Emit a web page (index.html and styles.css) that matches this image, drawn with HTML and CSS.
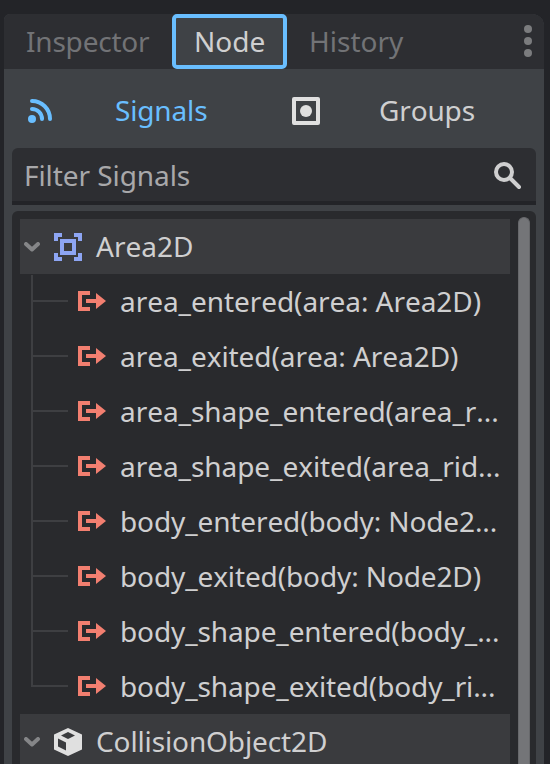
FILE: index.html
```
<!DOCTYPE html>
<html lang="en">
<head>
<meta charset="utf-8">
<title>Node</title>
<link rel="stylesheet" href="styles.css">
</head>
<body>
<svg width="0" height="0" class="defs">
  <symbol id="signal" viewBox="0 0 28 20"><path d="M0 0h12v4H4v12h8v4H0zM8 8h10V2l10 8-10 8v-6H8z"/></symbol>
  <symbol id="chevron" viewBox="0 0 16 10"><path d="M2 2l6 5.5L14 2" fill="none" stroke="currentColor" stroke-width="4" stroke-linecap="round" stroke-linejoin="round"/></symbol>
</svg>
<main class="dock">
  <nav class="tabs">
    <div class="tab inspector">Inspector</div>
    <div class="tab active">Node</div>
    <div class="tab history">History</div>
    <svg class="more" width="8" height="32" viewBox="0 0 8 32"><circle cx="4" cy="4" r="4"/><circle cx="4" cy="16" r="4"/><circle cx="4" cy="28" r="4"/></svg>
  </nav>
  <div class="modes">
    <div class="mode signals">
      <svg width="24" height="24" viewBox="0 0 24 24"><circle cx="4" cy="20" r="4" fill="currentColor"/><path d="M4 2a18 18 0 0 1 18 18M4 10a10 10 0 0 1 10 10" fill="none" stroke="currentColor" stroke-width="4" stroke-linecap="round"/></svg>
      <span>Signals</span>
    </div>
    <div class="mode groups">
      <svg width="28" height="28" viewBox="0 0 28 28"><rect x="2" y="2" width="24" height="24" fill="none" stroke="#e0e0e0" stroke-width="4" stroke-linejoin="round"/><circle cx="14" cy="14" r="6" fill="#e0e0e0"/></svg>
      <span>Groups</span>
    </div>
  </div>
  <div class="filter">
    <span>Filter Signals</span>
    <svg width="28" height="28" viewBox="0 0 28 28"><circle cx="10" cy="10" r="8"/><path d="M16 16l9 9"/></svg>
  </div>
  <div class="list">
    <div class="tree">
      <div class="group">
        <svg class="chevron" width="16" height="10"><use href="#chevron"/></svg>
        <svg class="kind" width="28" height="28" viewBox="0 0 28 28"><path fill="#8da5f3" fill-rule="evenodd" d="M0 0h8v4H4v4H0zM20 0h8v8h-4V4h-4zM0 20h4v4h4v4H0zM24 20h4v8h-8v-4h4zM6 6h16v16H6zM10 10v8h8v-8z"/></svg>
        <span>Area2D</span>
      </div>
      <ul class="items">
        <li><svg width="28" height="20"><use href="#signal"/></svg>area_entered(area: Area2D)</li>
        <li><svg width="28" height="20"><use href="#signal"/></svg>area_exited(area: Area2D)</li>
        <li><svg width="28" height="20"><use href="#signal"/></svg>area_shape_entered(area_r...</li>
        <li><svg width="28" height="20"><use href="#signal"/></svg>area_shape_exited(area_rid...</li>
        <li class="tight"><svg width="28" height="20"><use href="#signal"/></svg>body_entered(body: Node2...</li>
        <li class="tight"><svg width="28" height="20"><use href="#signal"/></svg>body_exited(body: Node2D)</li>
        <li class="tight"><svg width="28" height="20"><use href="#signal"/></svg>body_shape_entered(body_...</li>
        <li class="tight"><svg width="28" height="20"><use href="#signal"/></svg>body_shape_exited(body_ri...</li>
      </ul>
      <div class="group">
        <svg class="chevron" width="16" height="10"><use href="#chevron"/></svg>
        <svg class="kind" width="28" height="28" viewBox="0 0 28 28"><path fill="#e0e0e0" fill-rule="evenodd" d="M14 0L28 6.5V21.500L14 28 0 21.500V6.500zM14 4L7 7.500 14 11 21 7.500zM4 10.500V18.500L12 22.500V14.500z"/></svg>
        <span class="tight">CollisionObject2D</span>
      </div>
    </div>
    <div class="scrollbar"></div>
  </div>
</main>
</body>
</html>
```
FILE: styles.css
```
* { box-sizing: border-box; }
body {
  margin: 0;
  height: 764px;
  overflow: hidden;
  background: #232428;
  color: #cfcfd0;
  font: 28px/55px "Noto Sans", sans-serif;
  font-kerning: none;
  white-space: nowrap;
}
svg { display: block; flex: none; }
.defs { position: absolute; }
.dock {
  width: 540px;
  height: 750px;
  margin: 14px 0 0 4px;
  display: flex;
  flex-direction: column;
  background: #3f4246;
  border-radius: 6px 12px 0 0;
  overflow: hidden;
}
.tabs { display: flex; height: 55px; flex: none; background: #2d2e32; color: #727376; }
.tab { height: 55px; }
.inspector { width: 168px; padding-left: 22px; letter-spacing: -0.2px; }
.active {
  width: 115px;
  padding-left: 18px;
  border: 4px solid #69beff;
  border-radius: 5px;
  background: #3f4246;
  color: #cfcfd0;
  line-height: 47px;
}
.history { padding-left: 22px; }
.more { margin: 11px 12px 0 auto; fill: #7b7c7e; }
.modes { display: flex; height: 79px; flex: none; padding-top: 14px; }
.mode { display: flex; align-items: center; height: 55px; letter-spacing: -0.15px; }
.signals { width: 264px; padding-left: 24px; gap: 63px; color: #69beff; }
.groups { padding-left: 24px; gap: 59px; }
.filter {
  display: flex;
  justify-content: space-between;
  height: 57px;
  flex: none;
  margin: 0 8px 6px;
  padding: 0 14px 0 12px;
  background: #2d2e32;
  border-bottom: 4px solid #232428;
  border-radius: 6px 6px 0 0;
  color: #a8a8aa;
  letter-spacing: -0.07px;
}
.filter svg { margin-top: 14px; fill: none; stroke: #cfcfd0; stroke-width: 4; stroke-linecap: round; }
.list {
  display: flex;
  justify-content: space-between;
  flex: 1;
  min-height: 0;
  margin: 0 8px;
  padding: 6px 6px 0 8px;
  background: #292a2d;
  border-radius: 6px 6px 0 0;
}
.tree { width: 490px; padding-top: 2px; }
.group { display: flex; align-items: center; height: 55px; padding-left: 4px; background: #3a3b3e; }
.chevron { color: #858688; }
.kind { margin: 0 14px; }
.items { list-style: none; margin: 0; padding: 0 0 0 11px; letter-spacing: -0.06px; }
.tight { letter-spacing: -0.12px; }
.items li { position: relative; display: flex; height: 55px; padding-left: 47px; }
.items svg { margin: 17px 14px 0 0; fill: #f27f70; }
.items li::before {
  content: "";
  position: absolute;
  left: 0;
  top: 0;
  width: 2px;
  height: 55px;
  background: #3e3f42;
}
.items li:first-child::before { top: 1px; height: 54px; }
.items li:last-child::before { height: 28px; }
.items li::after {
  content: "";
  position: absolute;
  left: 2px;
  top: 26px;
  width: 35px;
  height: 2px;
  background: #3e3f42;
}
.scrollbar {
  width: 12px;
  background: #747578;
  border: 1px solid #67686b;
  border-bottom: 0;
  border-radius: 6px 6px 0 0;
}
```
